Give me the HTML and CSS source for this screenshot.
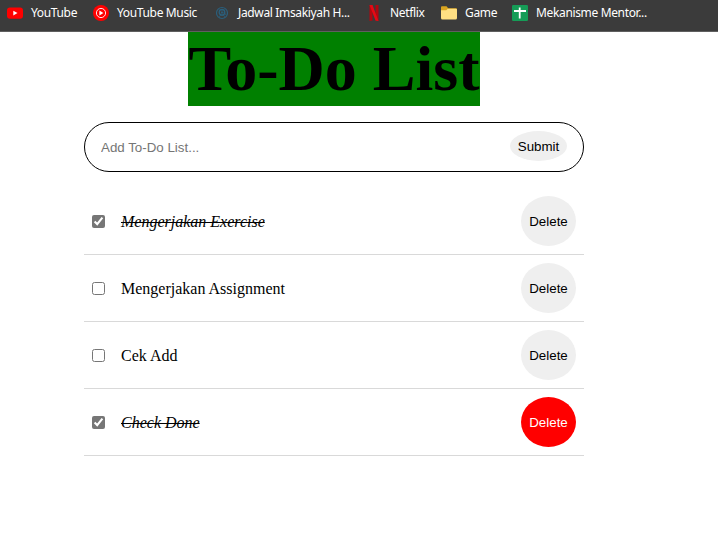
FILE: index.html
```html
<!DOCTYPE html>
<html lang="id">
<head>
<meta charset="utf-8">
<title>To-Do List</title>
<link rel="stylesheet" href="styles.css">
</head>
<body>
<nav class="bookmarks">
  <span class="bookmark">
    <svg class="icon" viewBox="0 0 16 16"><rect x="0" y="2.4" width="16" height="11.4" rx="3" fill="#f00"/><path d="M6.3 5.7v4.8l4.2-2.4z" fill="#fff"/></svg>
    <span class="label">YouTube</span>
  </span>
  <span class="bookmark">
    <svg class="icon" viewBox="0 0 16 16"><circle cx="8" cy="8" r="8" fill="#f00"/><circle cx="8" cy="8" r="4.6" fill="none" stroke="#fff" stroke-width=".9"/><path d="M6.4 5.5v5l4-2.5z" fill="#fff"/></svg>
    <span class="label">YouTube Music</span>
  </span>
  <span class="bookmark">
    <svg class="icon" viewBox="0 0 16 16" fill="none" stroke="#2b5f7c"><circle cx="8" cy="8" r="5.5" stroke-width="1.2"/><circle cx="8" cy="7.3" r="2.8" stroke-width="1.3"/><path d="M7 7.4h2.5M8 5.2v4.3M5 11.5c2-1.8 4-1.8 6 0M10.5 7v2.2h1.8" stroke-width=".9"/></svg>
    <span class="label">Jadwal Imsakiyah H...</span>
  </span>
  <span class="bookmark">
    <svg class="icon" viewBox="0 0 16 16"><path d="M3.5 0h3v15.6l-3 .4zM9.5 0h3v16l-3-.4z" fill="#b20710"/><path d="M3.500 0h3l6 16-3-.4z" fill="#e50914"/></svg>
    <span class="label">Netflix</span>
  </span>
  <span class="bookmark">
    <svg class="icon" viewBox="0 0 16 16"><path d="M0 2.2q0-1 1-1h4.500l1.700 2H15q1 0 1 1V9H0z" fill="#d9a520"/><path d="M0 5.300h5.200l1.700-1.500H15q1 0 1 1V13q0 1.500-1.500 1.500h-13Q0 14.500 0 13z" fill="#ffdf83"/></svg>
    <span class="label">Game</span>
  </span>
  <span class="bookmark">
    <svg class="icon" viewBox="0 0 16 16"><rect width="16" height="16" rx="1.2" fill="#169c57"/><path d="M2 6h12M7.700 2.500v11" fill="none" stroke="#fff" stroke-width="1.8"/></svg>
    <span class="label">Mekanisme Mentor...</span>
  </span>
</nav>
<main class="todo">
  <h1 class="title">To-Do List</h1>
  <form class="add-form">
    <input class="add-input" type="text" placeholder="Add To-Do List...">
    <button class="submit" type="button">Submit</button>
  </form>
  <ul class="list">
    <li class="item done"><input class="check" type="checkbox" checked><span class="text">Mengerjakan Exercise</span><button class="delete" type="button">Delete</button></li>
    <li class="item"><input class="check" type="checkbox"><span class="text">Mengerjakan Assignment</span><button class="delete" type="button">Delete</button></li>
    <li class="item"><input class="check" type="checkbox"><span class="text">Cek Add</span><button class="delete" type="button">Delete</button></li>
    <li class="item done"><input class="check" type="checkbox" checked><span class="text">Check Done</span><button class="delete active" type="button">Delete</button></li>
  </ul>
</main>
</body>
</html>
```
FILE: styles.css
```css
* { box-sizing: border-box; }

body {
  margin: 0;
  background: #fff;
  color: #000;
  font: 16px "Liberation Serif", serif;
  overflow: hidden;
}

.bookmarks {
  display: grid;
  grid-template-columns: 86px 121px 152px 75px 71px auto;
  height: 32px;
  padding: 5px 0 0 7px;
  background: #3b3b3b;
  border-bottom: 1px solid #5f5f5f;
  color: #fff;
  font: 12px/16px "Noto Sans", sans-serif;
  letter-spacing: -0.35px;
}

.bookmark {
  display: flex;
  gap: 8px;
  height: 16px;
  white-space: nowrap;
}

.icon { width: 16px; height: 16px; flex: none; }

.todo { width: 500px; margin-left: 84px; }

.title {
  width: fit-content;
  margin: 0 auto 16px;
  background: green;
  font-size: 64px;
  line-height: 74px;
}

.add-form {
  display: flex;
  align-items: flex-start;
  height: 50px;
  padding: 8px 16px;
  border: 1px solid #000;
  border-radius: 25px;
}

.add-input {
  flex: 1;
  min-width: 0;
  height: 32px;
  padding: 0;
  border: 0;
  outline: 0;
  background: none;
  font: 13.333px "Liberation Sans", sans-serif;
}

.add-input::placeholder { color: #757575; }

.submit, .delete {
  padding: 0;
  border: 0;
  border-radius: 50%;
  background: #efefef;
  color: #000;
  font: 13.333px "Liberation Sans", sans-serif;
}

.submit { width: 57px; height: 30px; }

.list { margin: 16px 0 0; padding: 0; list-style: none; }

.item {
  display: flex;
  align-items: center;
  height: 67px;
  padding: 0 8px;
  border-bottom: 1px solid #d9d9d9;
}

.check {
  width: 13px;
  height: 13px;
  margin: 0 16px 0 0;
  accent-color: #767676;
}

.text { flex: 1; padding-top: 1px; }

.done .text { font-style: italic; text-decoration: line-through; }

.delete { width: 55px; height: 50px; }

.delete.active { background: red; color: #fff; }
```
